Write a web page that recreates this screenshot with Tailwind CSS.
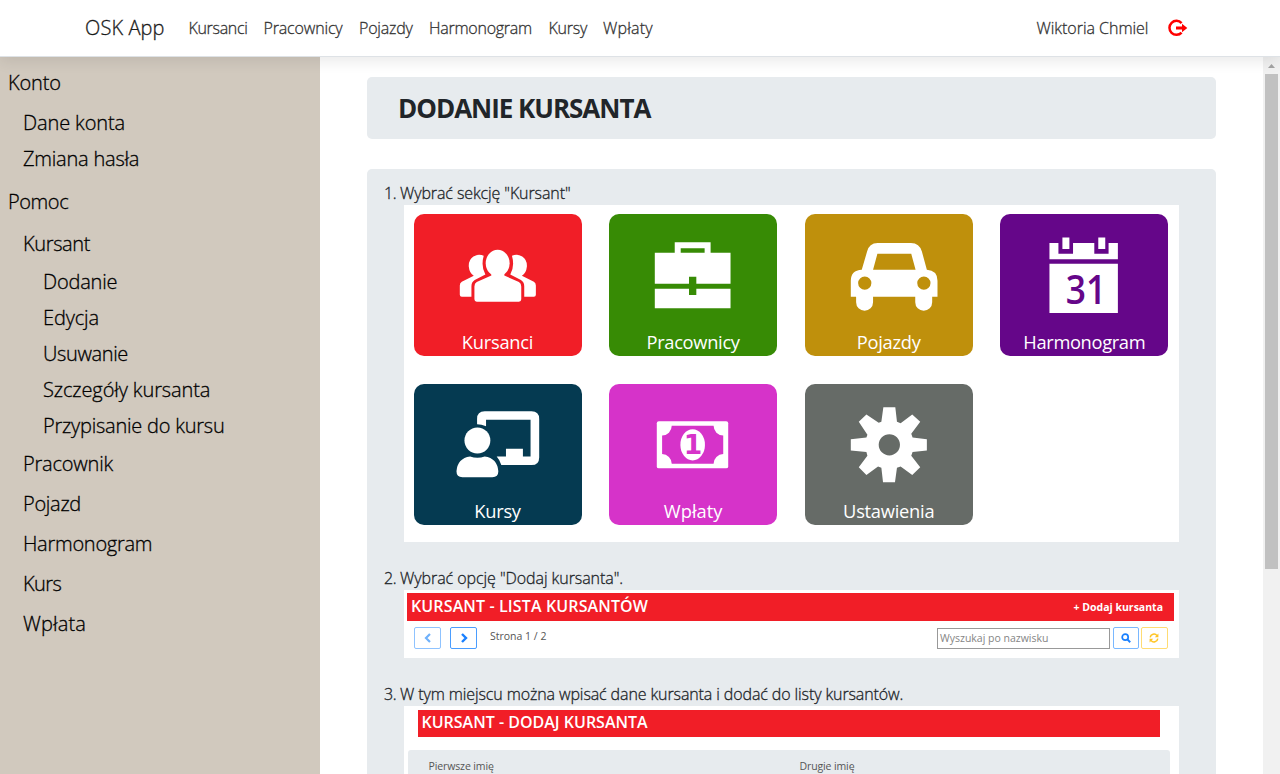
<!DOCTYPE html>
<html lang="pl">
<head>
<meta charset="utf-8">
<title>OSK App</title>
<script src="https://cdn.jsdelivr.net/npm/@tailwindcss/browser@4"></script>
</head>
<body class="h-screen overflow-hidden bg-white font-['Open_Sans','Noto_Sans',sans-serif] font-light text-[#212529]">
<div class="flex h-[774px] flex-col">
  <nav class="z-10 flex h-[57px] shrink-0 items-center border-b border-[#dee2e6] bg-white pl-[85px] shadow-[0_4px_14px_rgba(0,0,0,0.09)] [-webkit-text-stroke:0.3px]">
    <a class="w-[103.5px] text-xl tracking-[0.1px] text-[#1a1a1a]">OSK App</a>
    <div class="flex flex-1 text-base text-[#333]">
      <a class="w-[75px] tracking-[-0.32px]">Kursanci</a>
      <a class="w-[95.5px] tracking-[-0.16px]">Pracownicy</a>
      <a class="w-[70px] tracking-[-0.2px]">Pojazdy</a>
      <a class="w-[119.5px] tracking-[-0.25px]">Harmonogram</a>
      <a class="w-[54.5px] tracking-[-0.25px]">Kursy</a>
      <a class="tracking-[0.2px]">Wpłaty</a>
    </div>
    <a class="w-[131.5px] whitespace-nowrap text-base tracking-[-0.03px] text-[#333]">Wiktoria Chmiel</a>
    <svg class="mr-[92px] h-[18px] w-[20px]" viewBox="0 0 20 18" fill="none"><path d="M13.6 4.1A7 7 0 1 0 13.6 13.6" stroke="#f00" stroke-width="2.5"/><path d="M8 7.6H14V4.8L19.3 9 14 13.2V10.4H8Z" fill="#f00"/></svg>
  </nav>
  <div class="flex min-h-0 flex-1">
    <aside class="flex w-[320px] shrink-0 flex-col bg-[#d1c9be] pt-[11px] text-xl leading-[30px] text-black [-webkit-text-stroke:0.3px]">
      <a class="pl-2 tracking-[-0.15px]">Konto</a>
      <div class="mt-[10px] flex flex-col gap-[6px] pl-[23px]">
        <a class="tracking-[-0.12px]">Dane konta</a>
        <a class="tracking-[-0.21px]">Zmiana hasła</a>
      </div>
      <a class="mt-[13px] pl-2 tracking-[-0.42px]">Pomoc</a>
      <div class="mt-3 flex flex-col pl-[23px]">
        <a class="tracking-[-0.36px]">Kursant</a>
        <div class="mt-2 mb-2 flex flex-col gap-[6px] pl-5">
          <a class="tracking-[-0.2px]">Dodanie</a>
          <a class="tracking-[-0.13px]">Edycja</a>
          <a class="tracking-[-0.36px]">Usuwanie</a>
          <a class="tracking-[-0.1px]">Szczegóły kursanta</a>
          <a class="tracking-[-0.22px]">Przypisanie do kursu</a>
        </div>
        <div class="flex flex-col gap-[10px]">
          <a class="tracking-[-0.2px]">Pracownik</a>
          <a class="tracking-[-0.28px]">Pojazd</a>
          <a class="tracking-[-0.26px]">Harmonogram</a>
          <a class="tracking-[-0.6px]">Kurs</a>
          <a class="tracking-[0.14px]">Wpłata</a>
        </div>
      </div>
    </aside>
    <main class="flex-1 overflow-hidden pt-5 pr-[47px] pl-[47px]">
      <h1 class="flex h-[62px] items-center rounded-[5px] bg-[#e7ebee] pl-[31px] text-[26px] font-bold tracking-[-1.02px]">DODANIE KURSANTA</h1>
      <ol class="mt-[30px] flex h-[700px] flex-col gap-6 rounded-[5px] bg-[#e7ebee] pt-3 pl-[17px] leading-6">
        <li>
          <p class="flex [-webkit-text-stroke:0.3px]"><span class="w-4 tracking-[-0.4px]">1.</span><span class="tracking-[-0.1px]">Wybrać sekcję "Kursant"</span></p>
          <div class="ml-5 grid h-[337px] w-[775px] grid-cols-[168px_168px_168px_168px] grid-rows-[141.5px_141.5px] content-start gap-x-[27.6px] gap-y-[28px] bg-white pt-[9px] pl-[9.5px] text-[18.3px] leading-6 font-normal tracking-[-0.25px] text-white">
            <div class="relative flex flex-col items-center justify-end rounded-[10px] bg-[#f11e27] pb-[2px]"><svg class="absolute inset-0 h-full w-full" viewBox="40 27 504 426" fill="#fff"><ellipse cx="291" cy="175" rx="36" ry="40"/><path d="M272 205V212L228 232Q221 236 221 245V284Q221 291 228 291H355Q362 291 362 284V245Q362 236 355 232L311 212V205Z"/><path id="side" d="M249 153Q234 146 218 155 203 165 204 185 206 205 219 213L183 231Q177 234 177 242V270Q177 276 183 276H212V245Q212 232 222 226L254 209Q240 185 249 153Z"/><use href="#side" transform="translate(583 0) scale(-1 1)"/></svg><span class="relative">Kursanci</span></div>
            <div class="relative flex flex-col items-center justify-end rounded-[10px] bg-[#378b05] pb-[2px]"><svg class="absolute inset-0 h-full w-full" viewBox="628 27 504 426" fill="#fff"><path d="M825 145V112H933V145H915V130H843V145ZM765 144H993V237H890V216H868V237H765ZM765 252H868V271H890V252H993V311H765Z"/></svg><span class="relative tracking-[-0.3px]">Pracownicy</span></div>
            <div class="relative flex flex-col items-center justify-end rounded-[10px] bg-[#bf900c] pb-[2px]"><svg class="absolute inset-0 h-full w-full" viewBox="44 27 504 426" fill="#fff"><path fill-rule="evenodd" d="M214 195L230 140Q236 114 262 114H362Q388 114 395 140L410 195Q442 197 442 228V276H426V293A25.5 25.5 0 0 1 375 293V276H248V293A25.5 25.5 0 0 1 197 293V276H181V228Q181 197 214 195ZM248 195H376L363 147H261ZM203 235A20 20 0 1 0 243 235 20 20 0 1 0 203 235ZM381 235A20 20 0 1 0 421 235 20 20 0 1 0 381 235Z"/></svg><span class="relative">Pojazdy</span></div>
            <div class="relative flex flex-col items-center justify-end rounded-[10px] bg-[#650689] pb-[2px]"><svg class="absolute inset-0 h-full w-full" viewBox="632 27 504 426" fill="#fff"><path d="M780 114H807V147H851V114H915V147H958V114H986V163H780ZM819 98H840V132H819ZM927 98H948V132H927ZM780 177H986V325H780Z"/><text x="829" y="298" font-size="120" font-weight="600" fill="#650689" textLength="122" lengthAdjust="spacingAndGlyphs" letter-spacing="0" font-family="Open Sans">31</text></svg><span class="relative tracking-[-0.35px]">Harmonogram</span></div>
            <div class="relative flex flex-col items-center justify-end rounded-[10px] bg-[#053a51] pb-[2px]"><svg class="absolute inset-0 h-full w-full" viewBox="40 27 504 426" fill="#fff"><path d="M229 148V132Q229 109 252 109H393Q416 109 416 132V248Q416 271 393 271H302Q298 256 288 245H316V222H367V245H390V135H256V154Q242 148 229 148Z"/><circle cx="230" cy="197" r="39"/><path d="M167 290Q170 250 208 245 230 253 252 245 290 250 293 290 293 308 275 308H185Q167 308 167 290Z"/></svg><span class="relative">Kursy</span></div>
            <div class="relative flex flex-col items-center justify-end rounded-[10px] bg-[#d633c9] pb-[2px]"><svg class="absolute inset-0 h-full w-full" viewBox="628 27 504 426" fill="#fff"><rect x="771" y="139" width="215" height="142" rx="6"/><path fill="#d633c9" d="M816 153H942A29 29 0 0 0 971 182V238A29 29 0 0 0 942 267H816A29 29 0 0 0 787 238V182A29 29 0 0 0 816 153Z"/><ellipse cx="879" cy="210" rx="37" ry="47"/><text x="880" y="239" text-anchor="middle" font-size="80" font-weight="700" fill="#d633c9" font-family="DejaVu Sans">1</text></svg><span class="relative tracking-[0px]">Wpłaty</span></div>
            <div class="relative flex flex-col items-center justify-end rounded-[10px] bg-[#666b67] pb-[2px]"><svg class="absolute inset-0 h-full w-full" viewBox="44 27 504 426" fill="#fff"><path fill-rule="evenodd" d="M279 97H315L320 141 331 145 366 119 390 141 363 177 367 188 410 193V227L367 232 363 243 390 278 366 301 331 275 320 279 314 323H278L273 279 263 275 228 301 205 278 231 243 228 232 181 227V193L228 188 231 180 205 141 228 119 265 144 273 141ZM265 210A32 32 0 1 0 329 210 32 32 0 1 0 265 210Z"/></svg><span class="relative">Ustawienia</span></div>
          </div>
        </li>
        <li>
          <p class="flex [-webkit-text-stroke:0.3px]"><span class="w-4 tracking-[-0.4px]">2.</span><span class="tracking-[-0.06px]">Wybrać opcję "Dodaj kursanta".</span></p>
          <div class="ml-5 h-[68px] w-[775px] bg-white pt-[3px] pr-[5px] pl-[3px] font-normal">
            <div class="flex h-[28px] items-center justify-between bg-[#f11e27] pr-[11px] pl-1 text-white"><span class="pb-[2px] text-base font-semibold tracking-[0.13px]">KURSANT - LISTA KURSANTÓW</span><span class="text-[10.5px] font-bold tracking-[0px]">+ Dodaj kursanta</span></div>
            <div class="mt-[6px] flex h-[22px] items-center pr-[6.5px] pl-[7px]">
              <span class="flex h-[22px] w-[27px] items-center justify-center rounded-[2px] border border-[#8fc3ff]"><svg class="h-[10px] w-[8px]" viewBox="0 0 8 10" fill="none" stroke="#6fb1fb" stroke-width="2.2"><path d="M6 1L2 5 6 9"/></svg></span>
              <span class="ml-[9px] flex h-[22px] w-[27px] items-center justify-center rounded-[2px] border border-[#4a9dff]"><svg class="h-[10px] w-[8px]" viewBox="0 0 8 10" fill="none" stroke="#1a80ff" stroke-width="2.4"><path d="M2 1L6 5 2 9"/></svg></span>
              <span class="ml-[13px] flex-1 pb-1 text-[10.5px] text-[#555]">Strona 1 / 2</span>
              <span class="flex h-[21px] w-[173px] items-center border border-[#999] pl-[2px] text-[10.5px] text-[#858585]">Wyszukaj po nazwisku</span>
              <span class="ml-[3px] flex h-[22px] w-[25.5px] items-center justify-center rounded-[2px] border border-[#7ab8ff]"><svg class="h-[10px] w-[10px]" viewBox="0 0 10 10" fill="none" stroke="#1a80ff" stroke-width="1.7"><circle cx="4.2" cy="4.2" r="3"/><path d="M6.4 6.4L9.2 9.2" stroke-width="2"/></svg></span>
              <span class="ml-[2.5px] flex h-[22px] w-[26.5px] items-center justify-center rounded-[2px] border border-[#ffdc73]"><svg class="h-[10px] w-[10px]" viewBox="0 0 10 10" fill="none" stroke="#ffc421" stroke-width="1.5"><path d="M1.2 4.3A3.8 3.8 0 0 1 8 2.6M8.8 5.7A3.8 3.8 0 0 1 2 7.4"/><path fill="#ffc421" stroke="none" d="M9.4.6V4.2H5.8ZM.6 9.4V5.8H4.2Z"/></svg></span>
            </div>
          </div>
        </li>
        <li>
          <p class="flex [-webkit-text-stroke:0.3px]"><span class="w-4 tracking-[-0.4px]">3.</span><span class="tracking-[-0.11px]">W tym miejscu można wpisać dane kursanta i dodać do listy kursantów.</span></p>
          <div class="ml-5 h-[90px] w-[775px] bg-white pt-1 pr-[9px] pl-1 font-normal">
            <div class="mr-[10px] ml-[9.5px] flex h-[27px] items-center bg-[#f11e27] pb-[3px] pl-1 text-base font-semibold tracking-[0px] text-white">KURSANT - DODAJ KURSANTA</div>
            <div class="mt-[13px] flex h-[60px] rounded-[3px] bg-[#e7ebee] pt-1 pl-[20.5px] text-[10.5px] tracking-[-0.12px] text-[#555]"><span class="w-[371px]">Pierwsze imię</span><span>Drugie imię</span></div>
          </div>
        </li>
      </ol>
    </main>
    <div class="flex w-[17px] shrink-0 flex-col items-center bg-[#f1f1f1]">
      <svg class="h-[17px] w-[17px] shrink-0" viewBox="0 0 17 17"><path fill="#a3a3a3" d="M5 11L8.5 7 12 11Z"/></svg>
      <div class="h-[495px] w-[13px] bg-[#c1c1c1]"></div>
    </div>
  </div>
</div>
</body>
</html>
